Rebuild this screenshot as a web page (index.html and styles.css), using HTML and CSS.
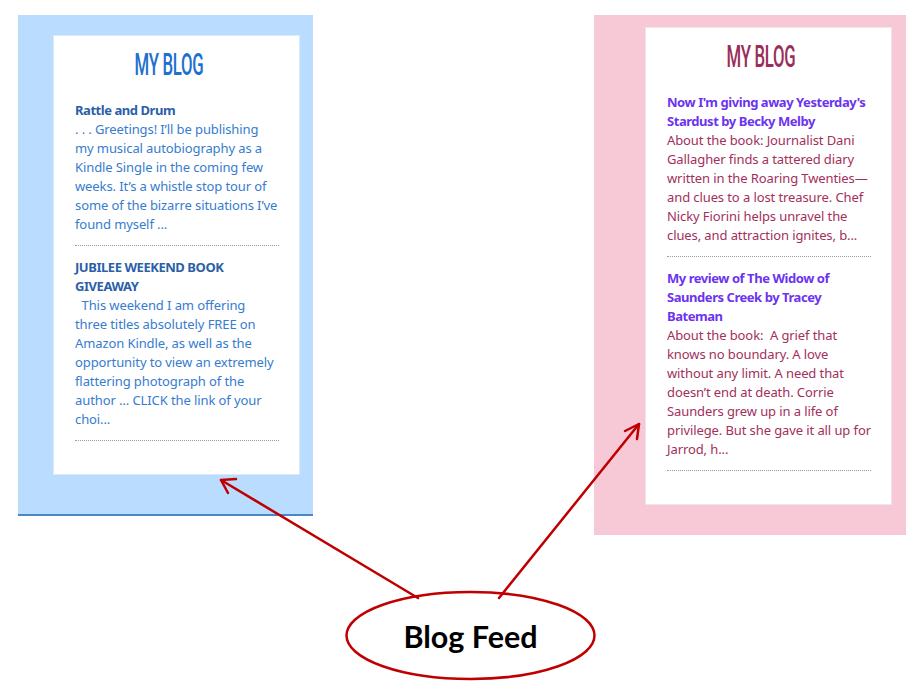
FILE: index.html
```html
<!DOCTYPE html>
<html>
<head>
<meta charset="utf-8">
<link rel="stylesheet" href="styles.css">
</head>
<body>
<div class="canvas">
  <div class="panels">
    <section class="panel panel-blue">
      <div class="card">
        <h2 class="blog-title">MY BLOG</h2>
        <div class="post">
          <div class="post-title">Rattle and Drum</div>
          <div class="post-body">. . . Greetings! I’ll be publishing<br>my musical autobiography as a<br>Kindle Single in the coming few<br>weeks. It’s a whistle stop tour of<br>some of the bizarre situations I’ve<br>found myself ...</div>
        </div>
        <div class="post">
          <div class="post-title">JUBILEE WEEKEND BOOK<br>GIVEAWAY</div>
          <div class="post-body">&nbsp;&nbsp;This weekend I am offering<br>three titles absolutely FREE on<br>Amazon Kindle, as well as the<br>opportunity to view an extremely<br>flattering photograph of the<br>author … CLICK the link of your<br>choi...</div>
        </div>
      </div>
    </section>
    <section class="panel panel-pink">
      <div class="card">
        <h2 class="blog-title">MY BLOG</h2>
        <div class="post">
          <div class="post-title">Now I'm giving away Yesterday's<br>Stardust by Becky Melby</div>
          <div class="post-body">About the book: Journalist Dani<br>Gallagher finds a tattered diary<br>written in the Roaring Twenties—<br>and clues to a lost treasure. Chef<br>Nicky Fiorini helps unravel the<br>clues, and attraction ignites, b...</div>
        </div>
        <div class="post">
          <div class="post-title">My review of The Widow of<br>Saunders Creek by Tracey<br>Bateman</div>
          <div class="post-body">About the book:&nbsp; A grief that<br>knows no boundary. A love<br>without any limit. A need that<br>doesn’t end at death. Corrie<br>Saunders grew up in a life of<br>privilege. But she gave it all up for<br>Jarrod, h...</div>
        </div>
      </div>
    </section>
  </div>
  <div class="callout">Blog Feed</div>
  <svg class="arrows" width="914" height="693" viewBox="0 0 914 693">
    <g fill="none" stroke="#c00000" stroke-width="2.5" stroke-linecap="round" stroke-linejoin="round">
      <line x1="418" y1="598" x2="221" y2="480"/>
      <polyline points="236,479 221,480 228,493"/>
      <line x1="499" y1="598" x2="639" y2="424"/>
      <polyline points="625,431 639,424 637,439"/>
      <ellipse cx="470.5" cy="635.5" rx="124" ry="43.5"/>
    </g>
  </svg>
</div>
</body>
</html>
```

FILE: styles.css
```css
* { box-sizing: border-box; }
html, body { margin: 0; padding: 0; background: #ffffff; }
.canvas {
  position: relative;
  width: 914px;
  height: 693px;
  overflow: hidden;
}
.panels {
  display: flex;
  align-items: flex-start;
  padding: 15px 0 0 18px;
  gap: 281px;
}
.panel {
  flex: none;
}
.panel-blue {
  width: 295px;
  height: 501px;
  background: #b9dcff;
  border-bottom: 2px solid #4a86c8;
  padding: 20px 0 0 35px;
}
.panel-pink {
  width: 312px;
  height: 520px;
  background: #f7c8d6;
  padding: 12px 0 0 51px;
}
.card {
  width: 247px;
  background: #ffffff;
  padding: 14px 0 0 21px;
  font-family: "Trebuchet MS", "Noto Sans", sans-serif;
  font-size: 13px;
  line-height: 19px;
  white-space: nowrap;
}
.panel-blue .card { height: 440px; border: 1px solid #dce9f7; }
.panel-pink .card { height: 478px; border: 1px solid #f0e4ea; }
.blog-title {
  margin: 0 0 21px -21px;
  padding-right: 15px;
  height: 30px;
  line-height: 30px;
  text-align: center;
  font-family: "Roboto", sans-serif;
  font-weight: 500;
  font-size: 31px;
  transform: scaleX(0.54);
  transform-origin: 115px 50%;
  letter-spacing: -0.5px;
}
.panel-blue .blog-title { color: #1d6fd0; }
.panel-pink .blog-title { color: #9a2d5a; }
.post {
  width: 204px;
  padding-bottom: 11px;
  border-bottom: 1px dotted #9a9a9a;
  margin-bottom: 12px;
}
.post-title { font-weight: 700; letter-spacing: -0.45px; }
.post-body { letter-spacing: -0.1px; }
.panel-blue .post-title { color: #2b5fa8; }
.panel-blue .post-body { color: #367ccf; }
.panel-pink .post-title { color: #6c33f0; }
.panel-pink .post-body { color: #a32f5c; }
.callout {
  position: absolute;
  left: 346px;
  top: 592px;
  width: 249px;
  height: 87px;
  display: flex;
  align-items: center;
  justify-content: center;
  font-family: "Lato", sans-serif;
  font-weight: 700;
  font-size: 30.5px;
  color: #000000;
  z-index: 2;
}
.arrows {
  position: absolute;
  left: 0;
  top: 0;
  pointer-events: none;
}
```
